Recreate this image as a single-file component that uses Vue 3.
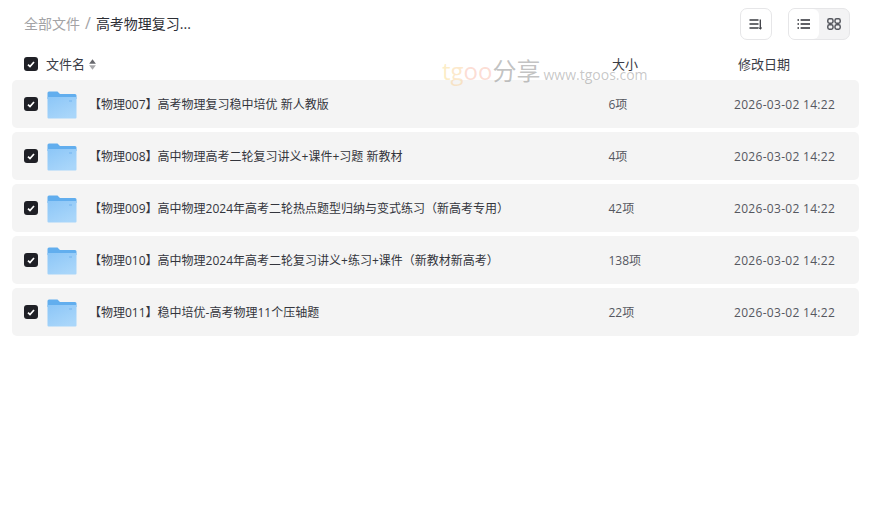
<script setup>
const rows = [
  { name: '【物理007】高考物理复习稳中培优 新人教版', size: '6项' },
  { name: '【物理008】高中物理高考二轮复习讲义+课件+习题 新教材', size: '4项' },
  { name: '【物理009】高中物理2024年高考二轮热点题型归纳与变式练习（新高考专用）', size: '42项' },
  { name: '【物理010】高中物理2024年高考二轮复习讲义+练习+课件（新教材新高考）', size: '138项' },
  { name: '【物理011】稳中培优-高考物理11个压轴题', size: '22项' }
]
</script>

<template>
  <div class="page">
    <header class="top">
      <div class="crumbs">
        <span class="root">全部文件</span>
        <span class="sep">/</span>
        <span class="current">高考物理复习...</span>
      </div>
      <div class="tools">
        <button class="tool single" type="button" aria-label="排序">
          <svg width="14" height="12" viewBox="0 0 14 12" fill="none" stroke="#3a3c42" stroke-width="1.3">
            <path d="M0.5 2H9.5M0.5 6H9.5M0.5 10H9.5" />
            <path d="M11.3 1.5V11" />
            <path d="M10 9.5L11.3 11.2L13 9.5" stroke-width="1" />
          </svg>
        </button>
        <div class="switch">
          <button class="seg active" type="button" aria-label="列表">
            <svg width="14" height="10" viewBox="0 0 14 10" fill="none" stroke="#2c2e35" stroke-width="1.3">
              <path d="M0.5 1H2M0.5 5H2M0.5 9H2M3.6 1H13M3.6 5H13M3.6 9H13" />
            </svg>
          </button>
          <button class="seg" type="button" aria-label="网格">
            <svg width="14" height="12" viewBox="0 0 14 12" fill="none" stroke="#55575e" stroke-width="1.5">
              <rect x="0.8" y="0.8" width="5.2" height="4.4" rx="1.6" />
              <rect x="8" y="0.8" width="5.2" height="4.4" rx="1.6" />
              <rect x="0.8" y="6.8" width="5.2" height="4.4" rx="1.6" />
              <rect x="8" y="6.8" width="5.2" height="4.4" rx="1.6" />
            </svg>
          </button>
        </div>
      </div>
    </header>

    <div class="head">
      <div class="name-col">
        <span class="check"><svg width="8" height="7" viewBox="0 0 8 7" fill="none" stroke="#fff" stroke-width="1.7"><path d="M1 3.6L3 5.6L7 1" /></svg></span>
        <span class="title">文件名</span>
        <svg class="sort" width="7" height="11" viewBox="0 0 7 11">
          <path d="M3.5 0.3L6.9 4.7H0.1Z" fill="#66676c" />
          <path d="M3.5 10.7L6.9 6.3H0.1Z" fill="#a8a8ab" />
        </svg>
      </div>
      <div class="size-col">大小</div>
      <div class="date-col">修改日期</div>
    </div>

    <div class="list">
      <div v-for="row in rows" :key="row.name" class="row">
        <span class="check"><svg width="8" height="7" viewBox="0 0 8 7" fill="none" stroke="#fff" stroke-width="1.7"><path d="M1 3.6L3 5.6L7 1" /></svg></span>
        <svg class="folder" width="30" height="28" viewBox="0 0 30 28">
          <defs>
            <linearGradient id="folderFront" x1="0" y1="0" x2="0.6" y2="1">
              <stop offset="0" stop-color="#8cc6f7" />
              <stop offset="1" stop-color="#a9d6fa" />
            </linearGradient>
          </defs>
          <path d="M0.5 2A1.5 1.5 0 0 1 2 0.5H10.5L13 3H28A1.5 1.5 0 0 1 29.5 4.5V8H0.5Z" fill="#62aeee" />
          <path d="M0.5 6H28.5A1 1 0 0 1 29.5 7V26.5A1 1 0 0 1 28.5 27.5H1.5A1 1 0 0 1 0.5 26.5Z" fill="url(#folderFront)" />
          <rect x="22" y="9" width="3" height="2" fill="#7fbcf2" opacity="0.7" />
        </svg>
        <span class="file-name">{{ row.name }}</span>
        <span class="size">{{ row.size }}</span>
        <span class="date">2026-03-02 14:22</span>
      </div>
    </div>

    <div class="mark">
      <span class="t1">t</span><span class="t2">g</span><span class="t3">oo</span><span class="t4">分享</span>
      <span class="t5">www.tgoos.com</span>
    </div>
  </div>
</template>

<style>
html, body { margin: 0; background: #fff; }
</style>

<style scoped>
.page {
  position: relative;
  width: 874px;
  height: 514px;
  overflow: hidden;
  font-family: "Open Sans", "Noto Sans CJK SC", sans-serif;
  color: #33353c;
}
.top {
  display: flex;
  justify-content: space-between;
  align-items: center;
  height: 32px;
  padding: 8px 24px 0;
}
.crumbs { display: flex; align-items: center; font-size: 14px; position: relative; top: -1px; }
.root { color: #a3a3a6; }
.sep { color: #a3a3a6; margin: 0 5px; font-size: 16px; }
.current { color: #2c2e35; }
.tools { display: flex; gap: 16px; }
button { padding: 0; border: 0; background: none; display: flex; align-items: center; justify-content: center; }
.tool.single {
  width: 32px;
  height: 32px;
  box-sizing: border-box;
  border: 1px solid #e6e6e8;
  border-radius: 7px;
}
.switch {
  display: flex;
  height: 32px;
  width: 62px;
  box-sizing: border-box;
  border: 1px solid #e6e6e8;
  border-radius: 7px;
  overflow: hidden;
  background: #f3f3f4;
}
.seg { flex: 1; }
.seg.active { background: #fff; border-radius: 0 6px 6px 0; }
.head {
  display: flex;
  align-items: center;
  height: 24px;
  margin-top: 12px;
  padding: 0 24px;
  font-size: 13px;
  color: #3a3c46;
}
.name-col { display: flex; align-items: center; width: 588px; }
.title { margin: 0 0 2px 8px; }
.sort { margin-left: 4px; }
.size-col { width: 126px; margin-bottom: 2px; }
.date-col { margin-bottom: 2px; }
.list {
  display: flex;
  flex-direction: column;
  gap: 4px;
  margin: 4px 15px 0 12px;
}
.row {
  display: flex;
  align-items: center;
  height: 48px;
  padding-left: 12px;
  background: #f4f4f4;
  border-radius: 5px;
  font-size: 12px;
  color: #33353c;
}
.check {
  display: flex;
  align-items: center;
  justify-content: center;
  width: 14px;
  height: 14px;
  flex: none;
  background: #1f2026;
  border-radius: 3px;
}
.folder { margin: 2px 0 0 9px; flex: none; }
.file-name { margin-left: 12px; width: 519.5px; flex: none; }
.size { width: 125.5px; flex: none; color: #55575f; }
.date { color: #55575f; white-space: nowrap; letter-spacing: 0.3px; }
.mark {
  position: absolute;
  left: 442px;
  top: 54px;
  display: flex;
  align-items: baseline;
  font-size: 24px;
  line-height: 34px;
  white-space: nowrap;
  pointer-events: none;
}
.t1 { color: rgba(250, 215, 130, 0.45); }
.t2 { color: rgba(250, 205, 140, 0.45); }
.t3 { color: rgba(250, 180, 160, 0.45); }
.t4 { color: rgba(120, 120, 120, 0.45); }
.t5 { color: rgba(120, 120, 120, 0.42); font-size: 14px; margin-left: 3px; }
</style>
